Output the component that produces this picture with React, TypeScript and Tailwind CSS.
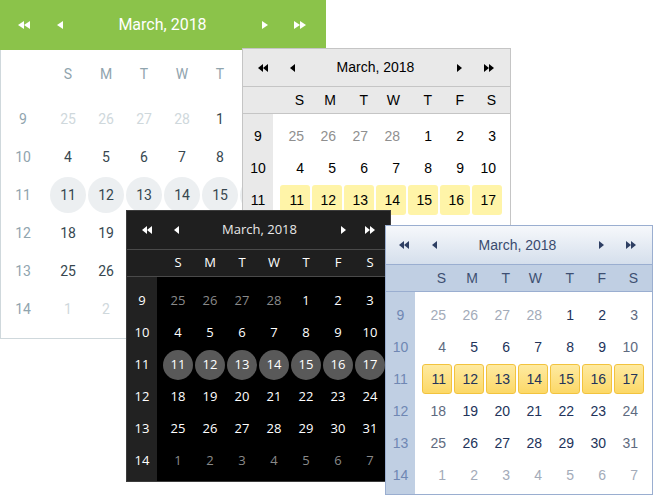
import React from 'react';

type Day = { d: number; other: boolean; weekend: boolean };
type Week = { n: number; days: Day[]; hl: boolean };

const mk = (n: number, nums: number[], other: (i: number) => boolean): Week => ({
    n,
    days: nums.map((d, i) => ({ d, other: other(i), weekend: i === 0 || i === 6 })),
    hl: n === 11,
});

const WEEKS: Week[] = [
    mk(9, [25, 26, 27, 28, 1, 2, 3], i => i < 4),
    mk(10, [4, 5, 6, 7, 8, 9, 10], () => false),
    mk(11, [11, 12, 13, 14, 15, 16, 17], () => false),
    mk(12, [18, 19, 20, 21, 22, 23, 24], () => false),
    mk(13, [25, 26, 27, 28, 29, 30, 31], () => false),
    mk(14, [1, 2, 3, 4, 5, 6, 7], () => true),
];

const DOW = ['S', 'M', 'T', 'W', 'T', 'F', 'S'];

function Arrow({ double, right, tw = 5 }: { double?: boolean; right?: boolean; tw?: number }) {
    const w = double ? tw * 2 : tw;
    const tri = (x: number) => `${x + tw},0 ${x},4 ${x + tw},8`;
    return (
        <svg width={w} height={8} viewBox={`0 0 ${w} 8`} className={right ? '-scale-x-100' : ''}>
            <polygon points={tri(0)} fill="currentColor" />
            {double && <polygon points={tri(tw)} fill="currentColor" />}
        </svg>
    );
}

function NavHeader({ className, gap1, gap2, titleClass, tw }: {
    className: string; gap1: string; gap2: string; titleClass: string; tw?: number;
}) {
    return (
        <div className={`flex items-center ${className}`}>
            <div className="w-[20px] flex justify-center"><Arrow double tw={tw} /></div>
            <div className={`w-[20px] flex justify-center ${gap1}`}><Arrow tw={tw} /></div>
            <div className={`flex-1 text-center ${titleClass}`}>March, 2018</div>
            <div className="w-[20px] flex justify-center"><Arrow right tw={tw} /></div>
            <div className={`w-[20px] flex justify-center ${gap2}`}><Arrow double right tw={tw} /></div>
        </div>
    );
}

// Material style, green header
function MaterialCalendar() {
    return (
        <div className="absolute left-0 top-0 w-[326px] font-['Roboto',sans-serif]">
            <NavHeader
                className="h-[50px] bg-[#8bc34a] text-white pl-[14px] pr-[16px]"
                gap1="ml-[16px]"
                gap2="ml-[15px]"
                titleClass="text-[16px]"
                tw={6}
            />
            <div className="bg-white border-x border-b border-[#cfd8dc] pt-[5px] pb-[10px] text-[14px]">
                <div className="grid grid-cols-[48px_repeat(7,38px)] h-[38px] items-center text-[#90a4ae]">
                    <div />
                    {DOW.map((d, i) => <div key={i} className="text-center">{d}</div>)}
                </div>
                <div className="mt-[7px]">
                    {WEEKS.map(w => (
                        <div key={w.n} className="grid grid-cols-[48px_repeat(7,38px)] h-[38px] items-center">
                            <div className="pr-[4px] text-center text-[#90a4ae]">{w.n}</div>
                            {w.days.map((d, i) => (
                                <div key={i} className="flex justify-center">
                                    <span className={`w-[36px] h-[36px] rounded-full flex items-center justify-center ${w.hl ? 'bg-[#eceff1]' : ''} ${d.other ? 'text-[#cfd8dc]' : 'text-[#37474f]'}`}>
                                        {d.d}
                                    </span>
                                </div>
                            ))}
                        </div>
                    ))}
                </div>
            </div>
        </div>
    );
}

// Default gray theme
function GrayCalendar() {
    return (
        <div className="absolute left-[242px] top-[48px] w-[269px] bg-white border border-[#c5c5c5] font-['Liberation_Sans',Arial,sans-serif] text-[14px] text-black">
            <NavHeader
                className="h-[38px] bg-[#e9e9e9] border-b border-[#c5c5c5] pl-[10px] pr-[11px] text-black"
                gap1="ml-[9px]"
                gap2="ml-[10px]"
                titleClass=""
            />
            <div className="grid grid-cols-[36px_repeat(7,32px)] h-[27px] items-center bg-[#e9e9e9] border-b border-[#c5c5c5]">
                <div />
                {DOW.map((d, i) => <div key={i} className="text-right pr-[7px]">{d}</div>)}
            </div>
            <div className="flex">
                <div className="w-[30px] bg-[#e9e9e9] pt-[6px] pb-[4px]">
                    {WEEKS.map(w => (
                        <div key={w.n} className="h-[32px] flex items-center justify-center">{w.n}</div>
                    ))}
                </div>
                <div className="ml-[6px] pt-[6px] pb-[4px]">
                    {WEEKS.map(w => (
                        <div key={w.n} className="grid grid-cols-[repeat(7,32px)] h-[32px]">
                            {w.days.map((d, i) => (
                                <div key={i} className={`m-[1px] h-[30px] rounded-[3px] leading-[30px] text-right pr-[6px] ${w.hl ? 'bg-[#fff4a8]' : ''} ${d.other ? 'text-[#8f8f8f]' : 'text-black'}`}>
                                    {d.d}
                                </div>
                            ))}
                        </div>
                    ))}
                </div>
            </div>
        </div>
    );
}

// Black theme
function BlackCalendar() {
    return (
        <div className="absolute left-[126px] top-[210px] w-[265px] bg-black border border-[#3c3c3c] font-['Open_Sans',sans-serif] text-[13px] text-white">
            <NavHeader
                className="h-[39px] bg-[#1f1f1f] border-b border-[#4a4a4a] pl-[10px] pr-[10px] text-white"
                gap1="ml-[9px]"
                gap2="ml-[7px]"
                titleClass="text-[#e8e8e8]"
            />
            <div className="grid grid-cols-[35px_repeat(7,32px)] h-[27px] items-center bg-[#1f1f1f] border-b border-[#4a4a4a]">
                <div />
                {DOW.map((d, i) => <div key={i} className="text-center">{d}</div>)}
            </div>
            <div className="flex">
                <div className="w-[30px] bg-[#222222] pt-[8px] pb-[4px]">
                    {WEEKS.map(w => (
                        <div key={w.n} className="h-[32px] flex items-center justify-center">{w.n}</div>
                    ))}
                </div>
                <div className="ml-[5px] pt-[8px] pb-[4px]">
                    {WEEKS.map(w => (
                        <div key={w.n} className="grid grid-cols-[repeat(7,32px)] h-[32px]">
                            {w.days.map((d, i) => (
                                <div key={i} className={`m-[1px] h-[30px] rounded-full flex items-center justify-center ${w.hl ? 'bg-[#595959]' : ''} ${d.other ? 'text-[#8a8a8a]' : 'text-white'}`}>
                                    {d.d}
                                </div>
                            ))}
                        </div>
                    ))}
                </div>
            </div>
        </div>
    );
}

// Blue theme
function BlueCalendar() {
    return (
        <div className="absolute left-[385px] top-[225px] w-[268px] bg-white border border-[#9aaed0] font-['Liberation_Sans',Arial,sans-serif] text-[14px]">
            <NavHeader
                className="h-[39px] bg-gradient-to-b from-[#f6f8fb] to-[#d5dfec] border-b border-[#9aaed0] pl-[8px] pr-[11px] text-[#2e3f63]"
                gap1="ml-[10px]"
                gap2="ml-[10px]"
                titleClass="text-[#3a4b6e]"
            />
            <div className="grid grid-cols-[35px_repeat(7,32px)] h-[27px] items-center bg-[#c0cfe3] border-b border-[#9aaed0] text-[#3e4f72]">
                <div />
                {DOW.map((d, i) => <div key={i} className="text-right pr-[7px]">{d}</div>)}
            </div>
            <div className="flex">
                <div className="w-[29px] bg-[#c0cfe3] pt-[7px] pb-[3px] text-[#6f87b3]">
                    {WEEKS.map(w => (
                        <div key={w.n} className="h-[32px] flex items-center justify-center">{w.n}</div>
                    ))}
                </div>
                <div className="ml-[6px] pt-[7px] pb-[3px]">
                    {WEEKS.map(w => (
                        <div key={w.n} className="grid grid-cols-[repeat(7,32px)] h-[32px]">
                            {w.days.map((d, i) => (
                                <div
                                    key={i}
                                    className={`m-[1px] h-[30px] rounded-[3px] leading-[28px] text-right pr-[5px] border ${
                                        w.hl ? 'border-[#f2c33e] bg-gradient-to-b from-[#feeaa0] to-[#fcd866]' : 'border-transparent'
                                    } ${d.other ? 'text-[#a3abb9]' : w.hl ? 'text-[#23345a]' : d.weekend ? 'text-[#5e6a80]' : 'text-[#22335a]'}`}
                                >
                                    {d.d}
                                </div>
                            ))}
                        </div>
                    ))}
                </div>
            </div>
        </div>
    );
}

export default function App() {
    return (
        <div className="relative w-[659px] h-[497px] bg-white overflow-hidden">
            <MaterialCalendar />
            <GrayCalendar />
            <BlackCalendar />
            <BlueCalendar />
        </div>
    );
}
